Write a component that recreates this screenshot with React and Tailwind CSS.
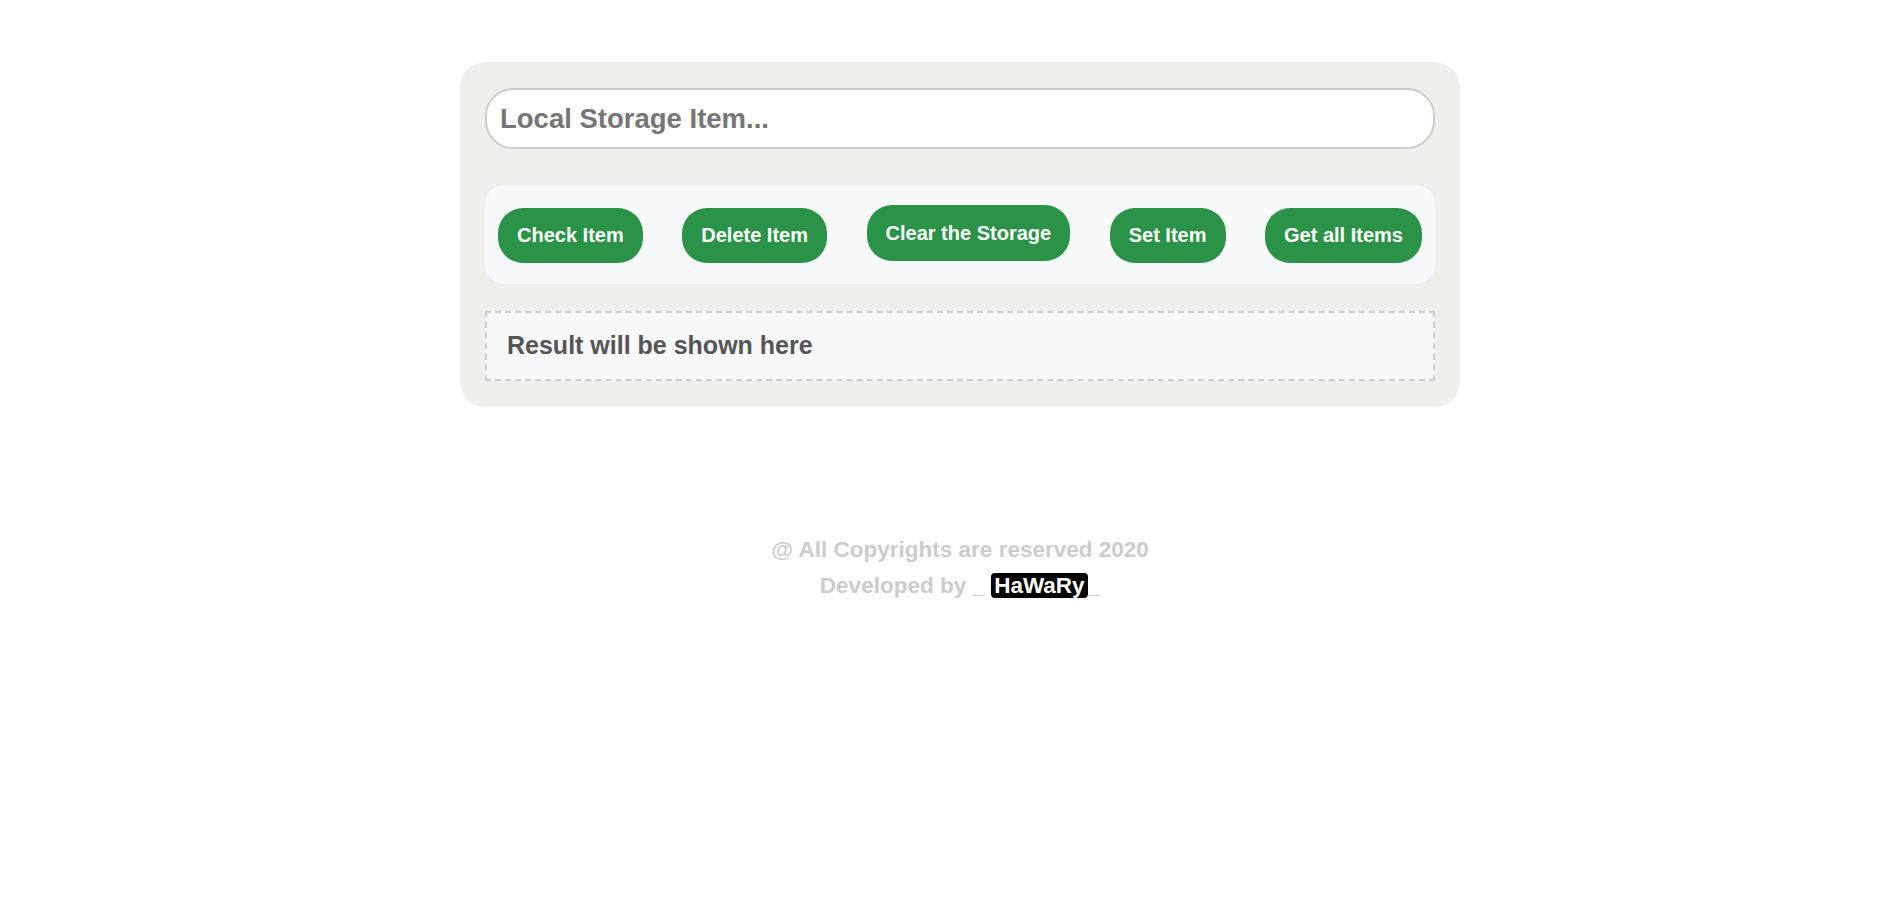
import { useState } from 'react'

// Button labels for the storage actions
const actions = ['Check Item', 'Delete Item', 'Clear the Storage', 'Set Item', 'Get all Items']

function App() {
  const [value, setValue] = useState('')
  const [result] = useState('Result will be shown here')

  return (
    <div className="min-h-screen bg-white pl-[17px] font-['Liberation_Sans',Arial,sans-serif]">
      <div className="mx-auto w-[1000px] pt-[62px]">
        {/* main card */}
        <div className="rounded-[25px] bg-[#efeeeb] px-[25px] pt-[26px] pb-[26px]">
          <input
            type="text"
            autoFocus
            value={value}
            onChange={(e) => setValue(e.target.value)}
            placeholder="Local Storage Item..."
            className="block h-[61px] w-full rounded-[28px] border-2 border-[#cccccc] bg-white pl-[13px] text-[27.5px] font-bold text-[#333] outline-none placeholder:text-[#757575]"
          />

          {/* action buttons */}
          <div className="mt-[36px] flex h-[99px] items-center justify-between rounded-[20px] bg-[#f7f8fa] px-[13px]">
            {actions.map((label) => (
              <button
                key={label}
                type="button"
                className={
                  label === 'Clear the Storage'
                    ? 'mb-[4px] rounded-[25px] bg-[#2b9348] px-[19px] py-4 text-[20px] font-bold leading-[24px] text-white'
                    : 'mt-[2px] rounded-[25px] bg-[#2b9348] px-[19px] py-4 text-[20px] font-bold leading-[23px] text-white'
                }
              >
                {label}
              </button>
            ))}
          </div>

          {/* result area */}
          <div className="mt-[27px] flex h-[70px] items-center border-2 border-dashed border-[#cccccc] bg-[#f7f8fa] pl-[20px]">
            <p className="text-[25px] font-bold text-[#555555]">{result}</p>
          </div>
        </div>

        {/* footer */}
        <div className="mt-[125px] text-center text-[22.5px] font-bold leading-[36px] text-[#cccccc]">
          <p>@ All Copyrights are reserved 2020</p>
          <p>
            Developed by _ <span className="rounded-[4px] bg-black px-[3px] text-white">HaWaRy</span>_
          </p>
        </div>
      </div>
    </div>
  )
}

export default App
